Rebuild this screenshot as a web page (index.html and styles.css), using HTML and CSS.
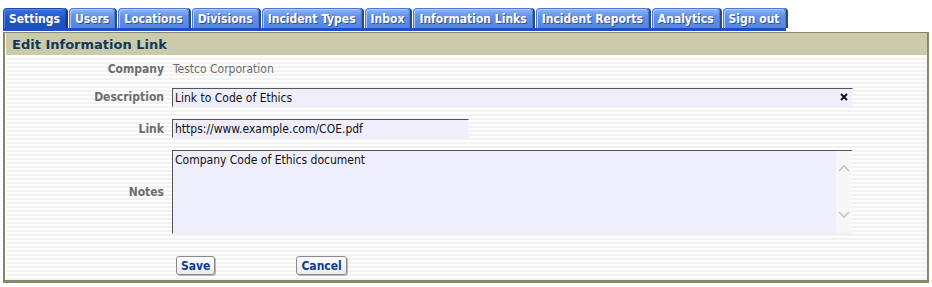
FILE: index.html
```html
<!DOCTYPE html>
<html lang="en">
<head>
    <meta charset="UTF-8">
    <title>Edit Information Link</title>
    <link rel="stylesheet" href="styles.css">
</head>
<body>
    <ul class="tabs">
        <li class="tab active">Settings</li>
        <li class="tab">Users</li>
        <li class="tab">Locations</li>
        <li class="tab">Divisions</li>
        <li class="tab">Incident Types</li>
        <li class="tab">Inbox</li>
        <li class="tab">Information Links</li>
        <li class="tab">Incident Reports</li>
        <li class="tab">Analytics</li>
        <li class="tab">Sign out</li>
    </ul>

    <div class="panel">
        <h1 class="panel-title">Edit Information Link</h1>
        <form class="panel-body">
            <div class="row">
                <label class="label">Company</label>
                <span class="value">Testco Corporation</span>
            </div>
            <div class="row">
                <label class="label" for="description">Description</label>
                <div class="field-wrap wide">
                    <input type="text" id="description" class="field" value="Link to Code of Ethics">
                    <svg class="clear" width="8" height="8" viewBox="0 0 8 8"><path d="M1 1 L7 7 M7 1 L1 7" stroke="#111111" stroke-width="1.8"/></svg>
                </div>
            </div>
            <div class="row">
                <label class="label" for="link">Link</label>
                <input type="text" id="link" class="field short" value="https://www.example.com/COE.pdf">
            </div>
            <div class="row">
                <label class="label" for="notes">Notes</label>
                <div class="notes-wrap">
                    <textarea id="notes" class="notes">Company Code of Ethics document</textarea>
                    <div class="scroll">
                        <svg width="12" height="8" viewBox="0 0 12 8"><path d="M1 7 L6 2 L11 7" fill="none" stroke="#c4c4c4" stroke-width="1.6"/></svg>
                        <svg width="12" height="8" viewBox="0 0 12 8"><path d="M1 1 L6 6 L11 1" fill="none" stroke="#c4c4c4" stroke-width="1.6"/></svg>
                    </div>
                </div>
            </div>
            <div class="row buttons">
                <span></span>
                <div class="button-bar">
                    <button type="button" class="btn">Save</button>
                    <button type="button" class="btn">Cancel</button>
                </div>
            </div>
        </form>
    </div>
</body>
</html>
```

FILE: styles.css
```css
* {
    margin: 0;
    padding: 0;
    box-sizing: border-box;
}

body {
    font-family: 'DejaVu Sans Condensed', 'DejaVu Sans', sans-serif;
    background: #ffffff;
    padding: 8px 3px 0 3px;
    width: 932px;
}

.tabs {
    list-style: none;
    display: flex;
    gap: 3px;
    width: 783px;
    border-bottom: 3px solid #1f4fc4;
}

.tab {
    flex-shrink: 0;
    white-space: nowrap;
    height: 20px;
    padding: 0 5px;
    font-size: 12px;
    font-weight: bold;
    line-height: 21px;
    color: #ffffff;
    text-shadow: 1px 1px 0 #33518a;
    background: linear-gradient(#8cb4f8, #5f90ec 40%, #5386e6);
    border: 1px solid #4a78d6;
    border-bottom: none;
    border-radius: 4px 4px 0 0;
    box-shadow: inset 1px 1px 0 #b0ccfa, 2px 0 0 #2c4a7c;
}

.tab.active {
    background: linear-gradient(#3a72de, #1f56cc 50%, #1a4fc2);
    border-color: #1a46b0;
    box-shadow: inset 1px 1px 0 #5b8ae8, 2px 0 0 #1a3a80;
}

.panel {
    width: 926px;
    border: 1px solid #87876b;
    border-width: 1px 2px 3px 2px;
    background: #ffffff;
    margin-top: 1px;
}

.panel-title {
    background: #cbcbab;
    border-left: 1px solid #ffffff;
    color: #13385c;
    font-family: 'DejaVu Sans', sans-serif;
    font-size: 13px;
    font-weight: bold;
    padding: 0 6px;
    height: 23px;
    line-height: 24px;
    border-bottom: 1px solid #ffffff;
}

.panel-body {
    background: repeating-linear-gradient(#ffffff 0, #ffffff 2px, #f2f2f2 2px, #f2f2f2 4px);
    border-left: 1px solid #ffffff;
    padding: 4px 0 5px 0;
}

.row {
    display: grid;
    grid-template-columns: 158px 1fr;
    column-gap: 8px;
    align-items: center;
    margin-bottom: 12px;
}

.row:first-child {
    margin-bottom: 9px;
}

.label {
    text-align: right;
    font-size: 12px;
    font-weight: bold;
    color: #6d6d6d;
}

.value {
    font-size: 12px;
    color: #6d6d6d;
    padding-left: 1px;
    height: 18px;
    line-height: 19px;
}

.field-wrap {
    position: relative;
    width: 681px;
}

.field {
    font-family: 'DejaVu Sans Condensed', 'DejaVu Sans', sans-serif;
    font-size: 12px;
    color: #111111;
    background: #eeeefc;
    border: none;
    border-top: 1px solid #555555;
    border-left: 1px solid #555555;
    border-right: 1px solid #f4f4f4;
    border-bottom: 1px solid #ececec;
    height: 19px;
    padding: 1px 2px 0 2px;
    outline: none;
}

.field-wrap .field {
    width: 100%;
}

.field.short {
    width: 297px;
}

.clear {
    position: absolute;
    right: 5px;
    top: 6px;
}

.notes-wrap {
    display: flex;
    width: 680px;
    height: 84px;
    border-top: 1px solid #555555;
    border-left: 1px solid #555555;
    border-bottom: 1px solid #ececec;
    background: #eeeefc;
}

.notes {
    flex: 1;
    font-family: 'DejaVu Sans Condensed', 'DejaVu Sans', sans-serif;
    font-size: 12px;
    color: #111111;
    background: transparent;
    border: none;
    resize: none;
    outline: none;
    padding: 2px 2px;
    overflow: hidden;
}

.scroll {
    width: 16px;
    background: #f7f7f7;
    display: flex;
    flex-direction: column;
    justify-content: space-between;
    align-items: center;
    padding: 13px 0 14px 0;
}

.scroll svg {
    display: block;
}

.row.buttons {
    margin-top: 22px;
    margin-bottom: 0;
}

.button-bar {
    display: flex;
    gap: 81px;
    padding-left: 4px;
}

.btn {
    font-family: 'DejaVu Sans Condensed', 'DejaVu Sans', sans-serif;
    font-size: 12px;
    font-weight: bold;
    color: #0c3a9a;
    background: linear-gradient(#ffffff, #ececec);
    border: 1px solid #8a8a8a;
    border-radius: 3px;
    box-shadow: 1px 1px 0 #b8b8b8;
    height: 19px;
    padding: 0 4px;
}
```
